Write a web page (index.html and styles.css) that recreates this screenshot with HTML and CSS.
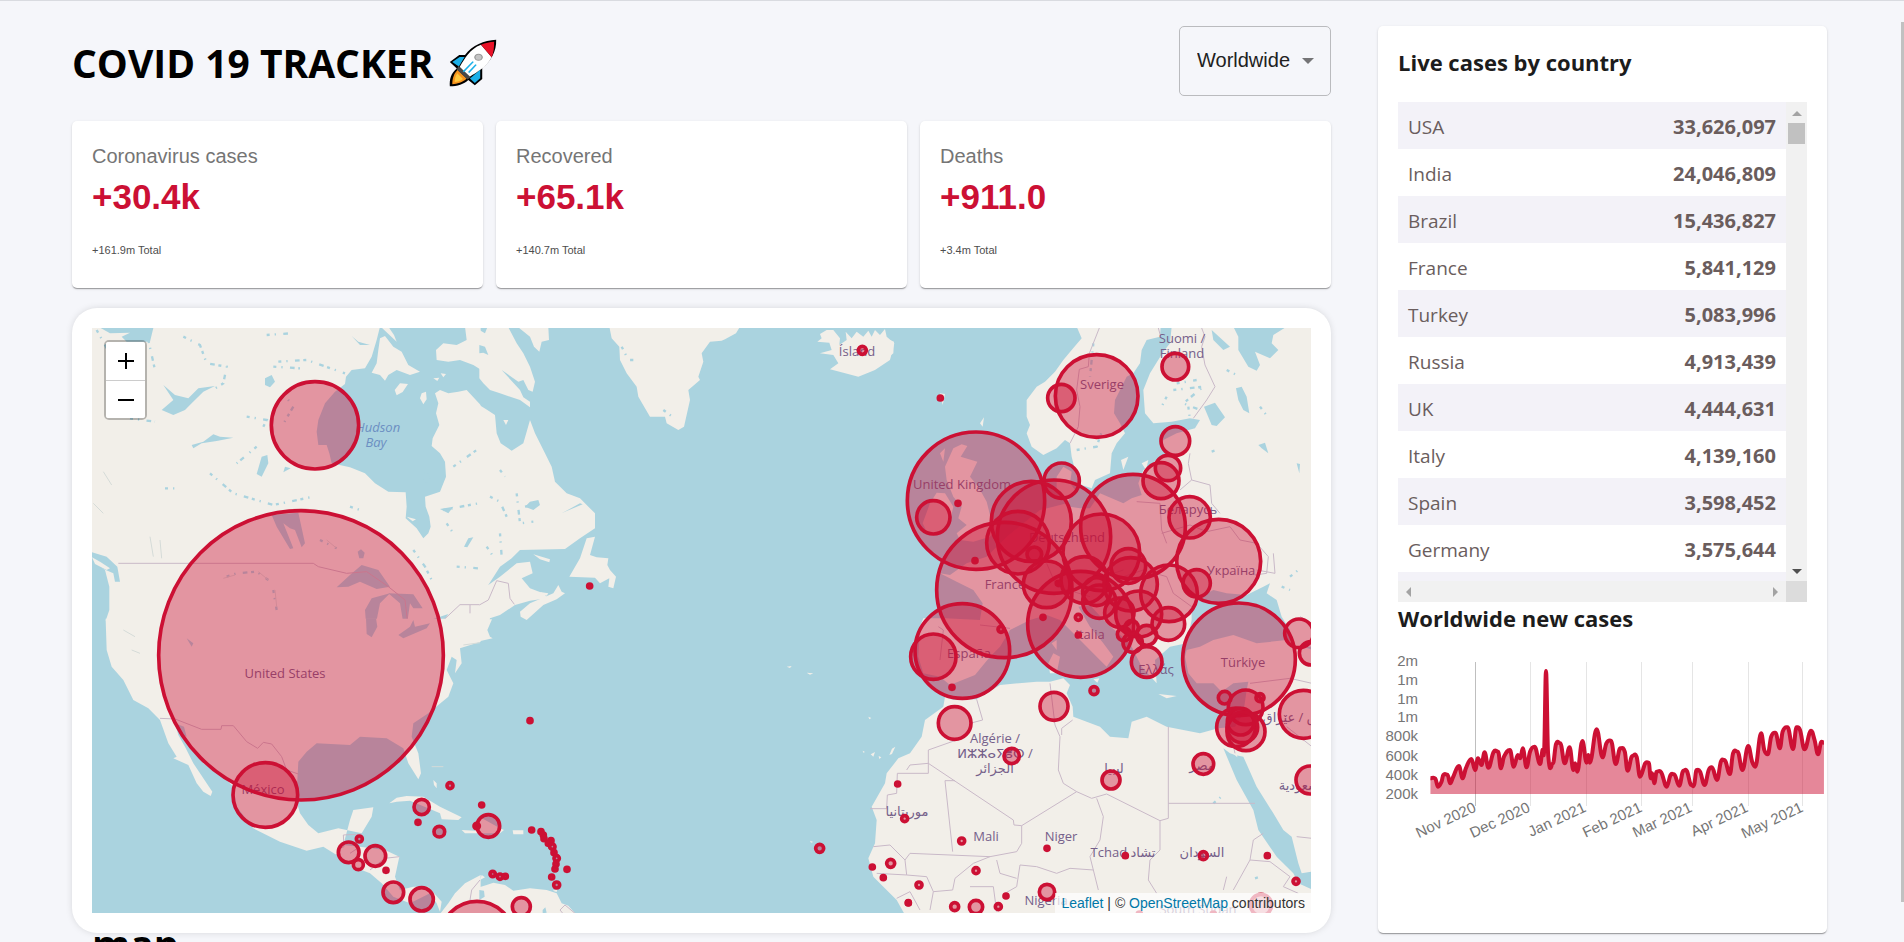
FILE: index.html
```html
<!DOCTYPE html>
<html lang="en">
<head>
<meta charset="utf-8">
<title>COVID 19 Tracker</title>
<link rel="stylesheet" href="styles.css">
</head>
<body>
<div class="app">
  <main class="layout">
    <section class="left">
      <header class="header">
        <h1 class="title">COVID 19 TRACKER
          <svg class="rocket" viewBox="965 120 117 142" preserveAspectRatio="none" aria-hidden="true">
            <path d="M1080 122C1050 124 1022 138 1004 167L990 167L967 188L984 207C969 222 966 240 967 260C985 260 1002 253 1012 241L1028 257L1046 238L1046 206C1068 185 1081 155 1080 122Z" fill="#000"/>
            <path d="M991 173L1003 173L989 201L973 188Z" fill="#1cb0e8"/>
            <path d="M1041 211L1041 236L1028 250L1016 237Z" fill="#1cb0e8"/>
            <path d="M986 211L1008 237C998 249 985 253 973 254C973 238 976 224 986 211Z" fill="#f7941d"/>
            <path d="M985 221L999 238C993 244 986 246 979 247C979 238 980 230 985 221Z" fill="#ffc83d"/>
            <path d="M1043 137C1015 150 1003 178 991 203L1014 233C1035 216 1055 205 1069 174Z" fill="#fff"/>
            <path d="M1043 137C1053 131 1065 129 1075 128C1075 145 1074 160 1069 174Z" fill="#e81228"/>
            <path d="M988 199L1018 233L1010 240L984 210Z" fill="#484848"/>
            <circle cx="1037" cy="174" r="9" fill="#c4c4c4" stroke="#999" stroke-width="3"/>
            <path d="M1024 187L1000 217M1031 196L1013 219" stroke="#1cb0e8" stroke-width="4"/>
          </svg>
        </h1>
        <div class="picker">
          <select class="picker-select" aria-label="Country"><option>Worldwide</option></select>
          <svg class="picker-arrow" viewBox="0 0 12 6" aria-hidden="true"><path d="M0 0H12L6 6Z"/></svg>
        </div>
      </header>

      <div class="stats">
        <article class="card stat"><h2 class="stat-name">Coronavirus cases</h2><p class="stat-value">+30.4k</p><p class="stat-total">+161.9m Total</p></article>
        <article class="card stat"><h2 class="stat-name">Recovered</h2><p class="stat-value">+65.1k</p><p class="stat-total">+140.7m Total</p></article>
        <article class="card stat"><h2 class="stat-name">Deaths</h2><p class="stat-value">+911.0</p><p class="stat-total">+3.4m Total</p></article>
      </div>

      <div class="map-card">
        <div class="map">
          <svg class="map-canvas" viewBox="92 328 1219 585" preserveAspectRatio="xMidYMid slice" role="img" aria-label="Cases by country">
            <rect x="92" y="328" width="1219" height="585" fill="#aad3df"/>

            <!-- Canada and northern United States -->
            <g transform="translate(60 310) scale(.33333)">
              <path class="land" d="M90 50H1262V932H137L148 900L148 830L135 780L90 750Z"/>
              <path class="water" d="M122 54H280L270 95L200 95L185 80L210 68L150 70Z"/>
              <path class="water" d="M960 50L950 90L935 140L915 175L875 180L858 200L855 222L825 245L795 280L775 330L770 365L775 405L800 405L808 430L815 460L870 472L915 490L945 520L985 545L1037 547L1040 590L1037 625L1070 655L1090 685L1105 670L1112 650L1108 620L1097 590L1095 560L1140 545L1158 500L1155 455L1140 430L1115 408L1118 385L1138 345L1128 310L1135 280L1125 250L1140 240L1165 250L1195 245L1220 240L1264 287V180L1240 165L1200 150L1165 155L1130 150L1128 120L1150 100L1190 105L1220 90L1215 50Z"/>
              <path class="land" d="M960 85L975 78L1000 110L1025 125L1045 165L1080 185L1050 195L1010 180L985 195L975 212L960 195L935 188L950 160L955 120ZM1004 240L1020 220L1044 222L1028 246L1010 256ZM1085 250L1098 245L1100 268L1090 283L1080 265ZM1120 205L1138 203L1132 213ZM1142 190L1158 192L1150 202ZM1040 620L1068 628L1058 634Z"/>
              <path class="land" d="M962 50L1010 95L1002 75L985 50Z"/>
              <path class="water" d="M305 300L340 270L310 225L345 255L385 265L415 235L465 228L430 245L395 280L375 300L340 315ZM395 405L430 395L460 373L480 380L520 383L470 393L425 400L400 415ZM590 492L605 440L622 435L625 460L605 500ZM615 205L635 195L645 215L630 232L615 225ZM875 78L895 95L930 105L900 105ZM1212 710L1225 685L1240 682L1222 712ZM1140 597L1180 590L1165 610ZM1085 500L1100 480L1112 510L1098 520ZM675 470L692 475L670 487Z"/>
              <path class="water" d="M635 615L715 608L735 700L725 712L705 660L690 655L670 640L700 715L690 717L650 650ZM830 832L870 795L905 765L955 780L990 830L950 837L900 815L865 830ZM920 965L915 900L935 865L990 850L960 880L950 930L948 965ZM985 850L1060 853L1088 895L1060 895L1050 880L1040 950L1030 940L1020 880ZM893 725L903 718L914 728L910 745L898 745ZM1095 935L1165 912L1150 935L1100 942Z"/>
              <path class="water" d="M90 725L140 740L172 770L180 815L165 815L160 790L125 775L90 755Z"/>
              <path class="land" d="M96 742L120 755L150 775L140 780L105 762Z"/>
              <path class="speck" d="M370 80L420 105L440 160L500 170L490 220L450 245M265 90L285 180M655 155L740 150L855 190M640 170L720 175M620 75L690 70M560 320L620 330L610 350M450 490L520 550L640 585L760 560M590 410L530 460M670 250L700 290L665 350M110 60L160 150L200 110M210 325L285 335M1180 470L1250 420M1150 600L1255 580M1160 640L1180 670M1060 720L1095 770L1120 820M1190 770L1255 775M870 590L900 600M780 690L830 715M500 800L530 790L590 785L625 810M640 840L650 900M315 535L350 535"/>
              <path class="contour" d="M130 485L155 525M100 580L130 610M270 680L280 740M300 690L305 745M490 805L525 795M595 785L625 810M645 840L650 890M800 690L830 715"/>
              <path class="border" d="M175 760H760L775 770L860 790L920 785L985 830L1035 870L1042 930L1030 960M1140 940L1200 884H1262M1230 885V910"/>
            </g>

            <!-- Labrador, Baffin, Greenland, Iceland -->
            <g transform="translate(480 310) scale(.33333)">
              <path class="land" d="M-2 285L22 300L45 315L50 370L62 400L95 422L130 400L140 365L150 330L165 370L195 430L215 470L225 515L260 550L300 565L345 610V655L300 685L255 717L120 720L95 745L60 770L25 825L60 800L110 760L150 755L158 790L125 805L150 835L195 852L200 865L150 872L105 885L60 915L30 925L20 962H-2Z"/>
              <path class="land" d="M120 905L150 880L220 850L235 825L245 845L255 850L230 868L190 885L140 930L122 920ZM268 800L300 745L320 685L345 680L330 735L350 742L385 745L382 765L390 780L408 800L400 835L385 830L388 805L360 820L345 803ZM160 733L210 748L208 757L180 748ZM175 845L205 850L200 857ZM70 330L85 330L78 345Z"/>
              <path class="land" d="M-2 60L15 70L22 52H85L110 100L130 130L150 170L165 215L158 245L145 240L130 210L115 215L65 180L120 240L130 262L150 275V292L120 270L60 250L30 240L10 220L-2 205ZM115 52H205L207 90L185 95L178 125L162 110L150 80Z"/>
              <path class="water" d="M-2 105L15 110L25 135L10 128L-2 130Z"/>
              <path class="land" d="M388 50H780L768 70L735 88L725 92L690 95L665 130L670 155L655 200L660 210L625 240L630 270L612 350L595 360L560 340L555 320L510 320L475 260L470 230L440 190L420 150L418 110L395 85Z"/>
              <path class="land" d="M1012 95L1025 85L1020 72L1040 60L1060 60L1080 85L1078 105L1100 90L1097 65L1115 85L1130 65L1150 80L1165 62L1175 80L1185 60L1200 75L1215 57L1220 80L1243 100L1230 150L1185 180L1135 200L1090 188L1050 178L1075 160L1060 135L1020 130L1055 120L1048 98Z"/>
              <path class="speck" d="M30 560L60 575L80 620M135 590L180 580M60 480L75 500M60 670L65 740M110 550L120 640L160 635M20 710L40 740M425 110L445 150L460 150M550 300L590 330"/>
              <path class="water" d="M245 610L300 580L308 583L260 603ZM150 575L175 570L180 585L160 600L135 590Z"/>
              <path class="border" d="M-2 885L25 870L50 812L85 820L90 865L103 883"/>
            </g>

            <!-- United States, Mexico, Central America -->
            <g transform="translate(60 620) scale(.33333)">
              <path class="land" d="M137 0L140 90L155 140L190 180L220 240L265 265L300 300L325 370L350 410L340 415L385 435L410 490L430 515L452 528L457 515L430 475L400 430L375 380L355 345L345 310L385 370L430 430L500 480L520 500L530 560L580 625L660 665L740 692L790 680L830 705L880 740L930 760L965 790L1000 830L1050 850L1110 820L1130 850L1140 875L1145 845L1105 800L1060 800L1020 810L1005 770L1018 710L975 690L900 680L850 675L870 600L880 570L940 562L935 590L905 640L835 625L775 640L745 615L720 580L710 545L712 480L715 425L740 395L770 370L870 375L900 350L980 355L1030 385L1045 430L1075 478L1083 460L1075 400L1055 350L1060 310L1105 280L1165 230L1180 190L1160 150L1175 110L1190 120L1185 160L1205 130L1200 85L1262 65V-4H137Z"/>
              <path class="water" d="M918 -5H948L952 20L935 52L920 42ZM1015 45L1050 20L1060 0L1065 20L1110 10L1100 25L1030 55ZM380 55L400 70L395 80ZM345 310L372 320L380 350L360 340Z"/>
              <path class="land" d="M988 550L1010 533L1040 528L1090 530L1140 560L1205 592L1195 600L1145 598L1140 580L1110 567L1050 542L1010 545ZM1205 630L1245 632L1262 590V640L1215 640ZM1140 882L1165 850L1185 820L1215 790L1262 765V882ZM1120 480L1130 490V505L1122 495Z"/>
              <path class="border" d="M300 295L345 297L425 328H483L485 317H520L560 365L593 385L610 367L635 372L665 410L680 450L715 462M905 642L850 645L852 680L840 685L830 705M900 680L870 700M1018 710L975 715L930 750M1260 780L1235 810L1230 840L1260 845"/>
              <path class="contour" d="M1210 75L1260 68M1115 440L1150 440M190 30L225 50M215 90L240 100"/>
            </g>

            <!-- New England, Caribbean, Atlantic islands -->
            <g transform="translate(480 620) scale(.33333)">
              <path class="land" d="M-2 -2H36L22 30L30 50L38 55L-2 64ZM98 631H130V643H100ZM-2 590L60 625L72 630L60 640L-2 640ZM-2 802L20 795L40 788L75 795L100 812L150 805L200 810L230 820L245 850L265 857L287 882H-2ZM5 765L15 772L0 780ZM218 812L232 808L230 816Z"/>
              <path class="land" d="M920 140L935 138L930 144ZM980 158L1000 160L990 164ZM1165 290L1174 294L1168 298ZM1148 392L1155 396L1150 398ZM1172 403L1185 396L1180 410ZM1196 408L1204 412L1198 417ZM1228 405L1236 386L1246 380L1236 402ZM990 662L1000 666L993 668Z"/>
              <path class="water" d="M-2 810L12 812L14 830L-2 840ZM188 870L196 862L200 878L188 880Z"/>
              <path class="border" d="M285 880L255 855L240 870L250 882"/>
            </g>

            <!-- Europe -->
            <g transform="translate(890 310) scale(.33333)">
              <path class="land" d="M560 50L575 85L545 120L520 150L495 185L465 215L440 230L410 270V320L420 345L410 370L425 410L460 435L500 415L525 390L540 400L545 440L560 500L575 525L605 535L615 510L660 490L665 430L680 400L705 370L690 340L672 310L675 270L710 200L730 190L750 160L755 120L770 90L810 80L812 50Z"/>
              <path class="land" d="M845 50L840 100L820 125L780 190L760 240L765 310L790 340L845 335L900 325L930 330L915 355L860 370L820 390L815 410L835 430L800 450L760 480L745 520L755 555L725 565L700 580L630 550L600 595L570 595L540 590L515 565L500 540V500L520 470L545 485L540 520L555 540L530 580L490 590L450 600L400 640L350 680L290 740L230 760L180 795L150 790L200 815L250 840L278 880L270 930L165 925L100 925L90 950L85 1040L100 1090L150 1100L180 1125L255 1095L300 1040L330 1010L360 960L420 930L470 915L510 930L550 970L620 1040L650 1070L670 1040L640 1000L600 950L565 890L600 885L650 940L720 1000L755 1070L800 1120L795 1050L840 1010L890 1000L905 930V900L930 860L970 840L1010 850L1070 855L1120 830L1140 820L1130 850L1160 870L1175 920L1200 960L1200 1010H1266V50Z"/>
              <path class="land" d="M190 415L215 403L232 408L212 440L262 455L240 500L265 530L290 575L300 615L325 650L300 680L250 695L210 690L200 670L230 645L205 625L215 590L190 560L170 510L165 470ZM120 580L140 548L165 550L190 590L175 655L115 675L98 640ZM150 430L165 415L160 455ZM270 340L282 322L278 350ZM150 250L165 252L158 285ZM0 90L12 95L10 130L0 138ZM693 450L715 440L700 480ZM755 460L775 450L768 480ZM475 1060L490 1030L510 1040L500 1090L480 1090ZM485 1000L500 990L500 1020Z"/>
              <path class="water" d="M1030 50H1190L1150 75L1145 100L1165 120L1140 145L1095 125L1110 165L1100 182L1075 170L1045 120L1045 80ZM942 290L975 278L1005 322L980 348L965 345ZM1038 235L1055 230L1070 260L1078 310L1060 300L1045 270ZM1105 405L1125 398L1135 430L1115 415ZM1220 460L1230 462L1228 490ZM965 60L1020 110L1000 120L970 90Z"/>
              <path class="speck" d="M850 240L940 230L880 280L930 300M860 220L920 210M895 290L900 330M1010 180L1050 200M965 425L980 420M1110 290L1140 330M610 100L600 200M560 420L620 410L640 350M830 260L810 300"/>
              <path class="border" d="M628 54L598 130L595 170L568 178L560 240L570 290L565 350L540 400M805 54L812 80M935 54L945 80L935 110L945 165L975 230L950 270L910 325M900 430L895 460L905 510M870 540L905 510L960 525L965 580L990 610M740 575L810 580L815 660L830 700M815 670L900 645L950 665L1020 650L1050 690L1100 700L1135 740L1130 790L1095 795M270 945L360 955M145 950L160 960L150 1050M700 800L760 780L830 800L850 850M560 780L640 800L700 780M470 760L500 830L600 860M850 850L905 890"/>
            </g>

            <!-- North Africa and Middle East -->
            <g transform="translate(890 540) scale(.33333)">
              <path class="land" d="M60 640L95 590L105 540L160 500L165 470L190 480L260 478L330 435L440 425L480 425L520 415L540 435L530 460L548 500L550 530L630 560L660 590L715 595L725 545L770 530L830 560L930 580L985 565L1035 560L1060 520L1070 450L1075 425L1030 430L995 455L970 430L920 430L895 400L885 350L890 330L930 320L970 300L1030 285L1100 310L1190 300L1266 330V1125H45L20 1080L-20 1040L-50 1010L-65 955L-45 910L-40 840L-55 800L-15 730L-10 700L25 655Z"/>
              <path class="water" d="M1000 625L1020 640L1035 645L1060 650L1100 740L1150 820L1180 870L1205 890L1225 970L1235 1000L1266 995V1048L1225 1030L1210 1000L1160 950L1105 870L1090 810L1040 720Z"/>
              <path class="land" d="M805 462L860 468L830 475ZM610 418L628 415L622 428Z"/>
              <path class="land" d="M1028 640L1040 630L1042 652Z"/>
              <path class="speck" d="M970 790L1000 765M1200 110L1225 90M1095 1015L1105 1012M1175 140L1200 150"/>
              <path class="border" d="M-60 806H-10L-8 765L20 760L22 700H115V630L200 600M50 690L60 675L115 670L370 840L372 855L395 857V910L380 935L300 950L60 940L45 960M195 722H165L188 935M395 857L560 755L520 730L505 690L510 590L495 555L480 430M515 585V565L548 540M560 755L605 775L650 762L810 842V930L780 960L775 1020L800 1060M810 842L835 835V560M835 790H1095M620 775L640 830L630 900L600 950L610 990L625 1050M610 990L540 985L500 1000L440 980L390 975L380 1040L345 1060M260 478L278 540L240 550M300 950L250 970L195 1015L188 1050L130 1055M320 960L330 1000L380 1015M240 1040H310L320 1115M-50 920L0 915L45 960L50 1005L-40 1000M130 1055L120 1110M50 1005L110 1010L130 1055M20 1075L60 1055L90 1110M1080 960L1090 900L1120 880M1080 960L1140 965L1200 1010L1180 1040L1225 1060M1080 960L1030 1050M1000 1050L1010 1010M1220 890L1266 895M1080 430L1200 415L1266 430M1190 560L1266 620M1020 570L1035 640M1150 40L1155 100L1100 90M1230 230L1266 250"/>
            </g>

            <g class="labels">
              <text x="285" y="678">United States</text>
              <text x="263" y="794">México</text>
              <text x="857" y="356">Ísland</text>
              <text x="1102" y="389">Sverige</text>
              <text x="962" y="489">United Kingdom</text>
              <text x="1067" y="542">Deutschland</text>
              <text x="1182" y="343">Suomi /</text>
              <text x="1182" y="358">Finland</text>
              <text x="1188" y="514">Беларусь</text>
              <text x="1231" y="575">Україна</text>
              <text x="1005" y="589">France</text>
              <text x="969" y="658">España</text>
              <text x="1090" y="639">Italia</text>
              <text x="1156" y="674">Ελλάς</text>
              <text x="1243" y="667">Türkiye</text>
              <text x="995" y="743">Algérie /</text>
              <text x="995" y="758">ⵍⵣⵣⴰⵢⴻⵔ /</text>
              <text x="995" y="773">الجزائر</text>
              <text x="1114" y="773">ليبيا</text>
              <text x="1202" y="770">مصر</text>
              <text x="907" y="816">موريتانيا</text>
              <text x="986" y="841">Mali</text>
              <text x="1061" y="841">Niger</text>
              <text x="1123" y="857">Tchad تشاد</text>
              <text x="1202" y="857">السودان</text>
              <text x="1046" y="905">Nigeria</text>
              <text x="1302" y="722">العراق / عێراق</text>
              <text x="1303" y="790">السعودية</text>
              <text x="1198" y="914">South Sudan</text>
              <g class="sea"><text x="378" y="432">Hudson</text><text x="376" y="447">Bay</text></g>
            </g>

            <!-- Case circles -->
            <g class="cases" transform="translate(60 310) scale(.33333)">
              <circle cx="765" cy="346" r="131"/><ellipse cx="723" cy="1036" rx="427" ry="434"/>
            </g>
            <g class="cases" transform="translate(480 310) scale(.33333)">
              <circle cx="329" cy="828" r="6"/><circle cx="1147" cy="121" r="12"/>
            </g>
            <g class="cases" transform="translate(60 620) scale(.33333)">
              <circle cx="616" cy="525" r="97"/><circle cx="1170" cy="497" r="9"/><circle cx="1085" cy="561" r="23"/><circle cx="1074" cy="607" r="6"/><circle cx="1138" cy="635" r="16"/><circle cx="898" cy="657" r="9"/><circle cx="866" cy="697" r="31"/><circle cx="946" cy="708" r="31"/><circle cx="895" cy="734" r="15"/><circle cx="978" cy="751" r="6"/><circle cx="1000" cy="817" r="31"/><circle cx="1085" cy="838" r="35"/><circle cx="1251" cy="954" r="110"/>
            </g>
            <g class="cases" transform="translate(480 620) scale(.33333)">
              <circle cx="150" cy="302" r="6"/><circle cx="5" cy="555" r="6"/><circle cx="25" cy="618" r="34"/><circle cx="-10" cy="618" r="8"/><circle cx="155" cy="630" r="6"/><circle cx="183" cy="635" r="6"/><circle cx="190" cy="645" r="6"/><circle cx="192" cy="656" r="6"/><circle cx="213" cy="662" r="6"/><circle cx="205" cy="670" r="6"/><circle cx="217" cy="680" r="8"/><circle cx="222" cy="698" r="6"/><circle cx="230" cy="715" r="8"/><circle cx="228" cy="732" r="6"/><circle cx="225" cy="747" r="6"/><circle cx="261" cy="748" r="6"/><circle cx="215" cy="771" r="6"/><circle cx="230" cy="795" r="9"/><circle cx="38" cy="762" r="8"/><circle cx="60" cy="770" r="8"/><circle cx="76" cy="769" r="6"/><circle cx="124" cy="860" r="27"/><circle cx="1019" cy="685" r="12"/><circle cx="1253" cy="492" r="6"/><circle cx="1274" cy="596" r="9"/><circle cx="1232" cy="730" r="12"/><circle cx="1177" cy="741" r="6"/><circle cx="1210" cy="773" r="6"/><circle cx="1285" cy="849" r="6"/>
            </g>
            <g class="cases" transform="translate(890 310) scale(.33333)">
              <circle cx="151" cy="264" r="6"/><circle cx="620" cy="258" r="124"/><circle cx="514" cy="264" r="41"/><circle cx="258" cy="572" r="206"/><circle cx="204" cy="580" r="6"/><circle cx="130" cy="622" r="50"/><circle cx="515" cy="512" r="53"/><circle cx="492" cy="680" r="170"/><circle cx="424" cy="634" r="120"/><circle cx="384" cy="698" r="94"/><circle cx="634" cy="727" r="115"/><circle cx="729" cy="650" r="157"/><circle cx="856" cy="170" r="40"/><circle cx="856" cy="393" r="43"/><circle cx="834" cy="474" r="38"/><circle cx="813" cy="512" r="54"/><circle cx="899" cy="622" r="62"/><circle cx="986" cy="754" r="126"/>
            </g>
            <g class="cases" transform="translate(890 540) scale(.33333)">
              <circle cx="343" cy="150" r="203"/><circle cx="217" cy="333" r="142"/><circle cx="130" cy="350" r="68"/><circle cx="333" cy="268" r="9"/><circle cx="186" cy="442" r="6"/><circle cx="255" cy="62" r="6"/><circle cx="572" cy="253" r="159"/><circle cx="470" cy="133" r="70"/><circle cx="433" cy="43" r="22"/><circle cx="583" cy="120" r="70"/><circle cx="628" cy="185" r="50"/><circle cx="620" cy="155" r="42"/><circle cx="565" cy="232" r="9"/><circle cx="565" cy="285" r="6"/><circle cx="459" cy="232" r="6"/><circle cx="505" cy="130" r="6"/><circle cx="612" cy="452" r="12"/><circle cx="492" cy="499" r="42"/><circle cx="194" cy="549" r="49"/><circle cx="365" cy="648" r="23"/><circle cx="663" cy="720" r="27"/><circle cx="215" cy="903" r="9"/><circle cx="471" cy="925" r="6"/><circle cx="258" cy="992" r="9"/><circle cx="87" cy="1035" r="9"/><circle cx="55" cy="1088" r="6"/><circle cx="194" cy="1100" r="12"/><circle cx="258" cy="1101" r="20"/><circle cx="325" cy="1100" r="9"/><circle cx="348" cy="1068" r="6"/><circle cx="471" cy="1056" r="23"/>
            </g>
            <g class="cases" transform="translate(1100 540) scale(.33333)">
              <circle cx="290" cy="130" r="41"/><circle cx="207" cy="160" r="85"/><circle cx="205" cy="252" r="49"/><circle cx="85" cy="78" r="52"/><circle cx="92" cy="133" r="80"/><circle cx="116" cy="222" r="69"/><circle cx="58" cy="218" r="44"/><circle cx="72" cy="283" r="20"/><circle cx="98" cy="308" r="29"/><circle cx="95" cy="262" r="20"/><circle cx="140" cy="286" r="30"/><circle cx="140" cy="366" r="46"/><circle cx="417" cy="358" r="169"/><circle cx="374" cy="473" r="19"/><circle cx="437" cy="502" r="52"/><circle cx="480" cy="473" r="12"/><circle cx="408" cy="562" r="58"/><circle cx="438" cy="575" r="57"/><circle cx="422" cy="545" r="40"/><circle cx="427" cy="562" r="46"/><circle cx="597" cy="280" r="43"/><circle cx="633" cy="340" r="35"/><circle cx="610" cy="523" r="72"/><circle cx="630" cy="720" r="42"/><circle cx="310" cy="672" r="31"/><circle cx="310" cy="947" r="12"/><circle cx="502" cy="947" r="6"/><circle cx="588" cy="1024" r="9"/><circle cx="76" cy="947" r="6"/><circle cx="483" cy="1095" r="32"/><circle cx="340" cy="1122" r="6"/><circle cx="118" cy="1122" r="6"/>
            </g>
          </svg>
          <div class="zoom">
            <button class="zoom-button" type="button" aria-label="Zoom in"><svg viewBox="0 0 16 16" aria-hidden="true"><path d="M8 0V16M0 8H16"/></svg></button>
            <button class="zoom-button" type="button" aria-label="Zoom out"><svg viewBox="0 0 16 16" aria-hidden="true"><path d="M0 8H16"/></svg></button>
          </div>
          <div class="credit"><a href="#leaflet">Leaflet</a> | © <a href="#osm">OpenStreetMap</a> contributors</div>
        </div>
      </div>
    </section>

    <aside class="card side">
      <h3 class="side-title">Live cases by country</h3>
      <div class="scroller">
        <div class="scroll-view">
          <table class="countries">
            <tbody>
              <tr><td>USA</td><td class="num">33,626,097</td></tr>
              <tr><td>India</td><td class="num">24,046,809</td></tr>
              <tr><td>Brazil</td><td class="num">15,436,827</td></tr>
              <tr><td>France</td><td class="num">5,841,129</td></tr>
              <tr><td>Turkey</td><td class="num">5,083,996</td></tr>
              <tr><td>Russia</td><td class="num">4,913,439</td></tr>
              <tr><td>UK</td><td class="num">4,444,631</td></tr>
              <tr><td>Italy</td><td class="num">4,139,160</td></tr>
              <tr><td>Spain</td><td class="num">3,598,452</td></tr>
              <tr><td>Germany</td><td class="num">3,575,644</td></tr>
              <tr><td></td><td></td></tr>
            </tbody>
          </table>
        </div>
        <div class="bar bar-v" aria-hidden="true">
          <svg class="tri" viewBox="0 0 10 10"><path d="M0 8L5 3L10 8Z" fill="#a3a3a3"/></svg>
          <span class="thumb"></span>
          <svg class="tri tri-end" viewBox="0 0 10 10"><path d="M0 2H10L5 7Z" fill="#505050"/></svg>
        </div>
        <div class="bar bar-h" aria-hidden="true">
          <svg class="tri" viewBox="0 0 10 10"><path d="M7 0V10L2 5Z" fill="#a3a3a3"/></svg>
          <svg class="tri tri-end" viewBox="0 0 10 10"><path d="M3 0V10L8 5Z" fill="#a3a3a3"/></svg>
        </div>
        <div class="bar-corner" aria-hidden="true"></div>
      </div>
      <h3 class="side-title">Worldwide new cases</h3>
      <svg class="chart" viewBox="1380 650 447 200" role="img" aria-label="Worldwide new cases chart">
        <path d="M1530.5 662V806M1586.5 662V806M1641.5 662V806M1692.5 662V806M1748.5 662V806M1802.5 662V806" stroke="#e5e5e5"/>
        <path d="M1475.5 662V806" stroke="#bfbfbf"/>
        <g transform="translate(1360 540) scale(.347 .33333)">
          <path class="area" id="area"/>
          <path class="line" id="line"/>
        </g>
        <g class="ticks">
          <text x="1418" y="666">2m</text><text x="1418" y="685">1m</text><text x="1418" y="704">1m</text><text x="1418" y="722">1m</text><text x="1418" y="741">800k</text><text x="1418" y="761">600k</text><text x="1418" y="780">400k</text><text x="1418" y="799">200k</text>
          <text transform="translate(1477 811) rotate(-25)">Nov 2020</text><text transform="translate(1531 811) rotate(-25)">Dec 2020</text><text transform="translate(1587 811) rotate(-25)">Jan 2021</text><text transform="translate(1643 811) rotate(-25)">Feb 2021</text><text transform="translate(1693 811) rotate(-25)">Mar 2021</text><text transform="translate(1749 811) rotate(-25)">Apr 2021</text><text transform="translate(1804 811) rotate(-25)">May 2021</text>
        </g>
      </svg>
    </aside>

    <h2 class="map-title">map</h2>
  </main>
  <div class="page-bar" aria-hidden="true"></div>
</div>
<script src="chart.js"></script>
</body>
</html>
```
FILE: chart.js
```js
// Daily new cases as x,y pairs in the chart's plot space.
const points = `203,715 217,716 225,740 235,725 240,705 252,704 260,730 268,712 285,678 296,715 305,685
321,657 332,690 340,655 350,675 359,637 370,683 385,636 398,635 406,685 415,650 432,630 443,680 455,645
462,655 469,625 480,682 490,635 503,620 519,672 526,630 531,625 536,393 542,640 556,670 565,612 577,610
590,670 604,622 615,690 620,670 626,695 641,603 653,668 658,645 662,668 682,568 699,652 710,610 723,602
737,672 750,625 763,635 771,692 785,648 797,650 807,710 822,670 832,668 838,715 842,700 848,730 855,695
868,697 884,740 895,705 905,703 920,737 932,692 942,693 955,735 963,734 970,690 980,695 993,735 1005,690
1014,682 1029,720 1040,665 1050,660 1066,702 1075,640 1088,635 1102,690 1119,618 1130,665 1139,680
1156,580 1165,630 1175,643 1185,590 1197,578 1210,625 1218,575 1232,562 1248,627 1258,562 1268,570
1281,628 1300,572 1310,600 1320,643 1330,605 1337,608`
  .split(/\s+/)
  .map((pair) => pair.split(",").map(Number));

const BASELINE = 762;

// Slope at a point: flat on peaks and dips, the neighbours' average elsewhere.
function slope(i) {
  const prev = points[i - 1];
  const here = points[i];
  const next = points[i + 1];
  if (!prev || !next) return 0;
  if ((here[1] - prev[1]) * (next[1] - here[1]) <= 0) return 0;
  return (next[1] - prev[1]) / (next[0] - prev[0]);
}

let curve = `M${points[0]}`;
for (let i = 1; i < points.length; i++) {
  const [x0, y0] = points[i - 1];
  const [x1, y1] = points[i];
  const reach = (x1 - x0) * 0.4;
  curve += `C${x0 + reach},${y0 + slope(i - 1) * reach} ${x1 - reach},${y1 - slope(i) * reach} ${x1},${y1}`;
}

document.getElementById("line").setAttribute("d", curve);
document.getElementById("area").setAttribute(
  "d",
  `${curve}V${BASELINE}H${points[0][0]}Z`
);
```
FILE: styles.css
```css
* { box-sizing: border-box; }

body {
  margin: 0;
  background: #f5f6fa;
  font-family: "Open Sans", "Noto Sans", sans-serif;
  color: #000;
}

h1, h2, h3, p { margin: 0; }

.app {
  position: relative;
  height: 100vh;
  overflow: hidden;
  border-top: 1px solid #d9dbe0;
}

.layout {
  display: grid;
  grid-template-columns: minmax(0, 1259fr) minmax(0, 449fr);
  column-gap: 47px;
  padding: 25px 77px 0 72px;
}

.card {
  background: #fff;
  border-radius: 5px;
  box-shadow: 0 2px 1px -1px rgba(0, 0, 0, .2), 0 1px 1px rgba(0, 0, 0, .14), 0 1px 3px rgba(0, 0, 0, .12);
}

.header {
  display: flex;
  align-items: center;
  justify-content: space-between;
  height: 70px;
  margin-bottom: 25px;
}

.title {
  display: flex;
  align-items: center;
  gap: 16px;
  padding-top: 4px;
  font-size: 39px;
  line-height: 50px;
  font-weight: 700;
}

.rocket { width: 48px; height: 48px; }

.picker { position: relative; }

.picker-select {
  appearance: none;
  width: 152px;
  height: 70px;
  padding: 0 40px 2px 17px;
  border: 1px solid #babbbe;
  border-radius: 5px;
  background: transparent;
  font: 20px "Liberation Sans", Arial, sans-serif;
  color: #212121;
}

.picker-arrow {
  position: absolute;
  right: 17px;
  top: 32px;
  width: 12px;
  height: 6px;
  fill: #747476;
  pointer-events: none;
}

.stats {
  display: grid;
  grid-template-columns: repeat(3, minmax(0, 1fr));
  gap: 13px;
  margin-bottom: 20px;
}

.stat {
  padding: 22px 20px 30px;
  font-family: "Liberation Sans", Arial, sans-serif;
}

.stat-name { font-size: 20px; line-height: 26px; font-weight: 400; color: #757575; }
.stat-value { margin-top: 8px; font-size: 35px; line-height: 40px; font-weight: 700; color: #cc1034; }
.stat-total { margin-top: 25px; font-size: 11px; line-height: 16px; color: #4e4e4e; }

.map-card {
  padding: 20px;
  border-radius: 25px;
  background: #fff;
  box-shadow: 0 0 8px -2px rgba(0, 0, 0, .2);
}

.map { position: relative; aspect-ratio: 1219 / 585; overflow: hidden; }
.map-canvas { display: block; width: 100%; height: 100%; }

.land { fill: #f2efe9; }
.water { fill: #aad3df; }
.speck { fill: none; stroke: #aad3df; stroke-width: 7; stroke-dasharray: 9 15 4 22 14 11; }
.contour { fill: none; stroke: #d5dbd8; stroke-width: 3; }
.border { fill: none; stroke: #c9b9c8; stroke-width: 3; stroke-linejoin: round; }

.labels text {
  font-family: "Open Sans", "Noto Sans", "DejaVu Sans", sans-serif;
  font-size: 13px;
  fill: #75608a;
  text-anchor: middle;
}

.labels .sea text { fill: #6c8fc2; font-style: italic; }

.cases { fill: #cc1034; fill-opacity: .4; stroke: #cc1034; stroke-width: 11; }

.zoom {
  position: absolute;
  top: 12px;
  left: 12px;
  width: 43px;
  border: 2px solid rgba(0, 0, 0, .25);
  border-radius: 5px;
  background-clip: padding-box;
}

.zoom-button {
  display: flex;
  align-items: center;
  justify-content: center;
  width: 100%;
  height: 37px;
  padding: 0;
  border: 0;
  border-radius: 0 0 2px 2px;
  background: #fff;
}

.zoom-button:first-child { height: 39px; border-bottom: 1px solid #ccc; border-radius: 2px 2px 0 0; }
.zoom-button svg { width: 16px; height: 16px; stroke: #000; stroke-width: 2; }

.credit {
  position: absolute;
  right: 0;
  bottom: 0;
  padding: 0 6px;
  background: rgba(255, 255, 255, .7);
  font: 14px/20px "Liberation Sans", Arial, sans-serif;
  color: #333;
}

.credit a { color: #0078a8; text-decoration: none; }

.side { padding: 19px 20px 20px; }

.side-title { font-size: 22px; line-height: 34px; font-weight: 700; color: #1c1c1c; }

.scroller {
  display: grid;
  grid-template: minmax(0, 1fr) 21px / minmax(0, 1fr) 21px;
  height: 500px;
  margin-top: 23px;
}

.scroller + .side-title { line-height: 32px; }

.scroll-view { overflow: hidden; }

.countries { width: 100%; border-collapse: collapse; color: #6a5d5d; }
.countries tr { height: 47px; }
.countries tr:nth-child(odd) { background: #f3f2f8; }
.countries td { padding: 2px 10px 0; font-size: 19px; line-height: 30px; }
.countries .num { font-size: 20px; font-weight: 700; text-align: right; }

.bar { display: flex; align-items: center; background: #f1f1f1; }
.bar-v { flex-direction: column; padding: 6px 2px 4px; }
.bar-h { padding: 0 6px; }
.bar-corner { background: #dcdcdc; }
.tri { width: 10px; height: 10px; }
.tri-end { margin-top: auto; }
.bar-h .tri-end { margin: 0 0 0 auto; }
.thumb { width: 17px; height: 21px; margin-top: 5px; background: #c1c1c1; }

.chart { display: block; width: calc(100% + 38px); margin: 16px -20px 0 -18px; }
.area { fill: #cc1034; fill-opacity: .5; }
.line { fill: none; stroke: #cc1034; stroke-width: 4; stroke-linejoin: round; vector-effect: non-scaling-stroke; }
.ticks text { font: 15px "Liberation Sans", Arial, sans-serif; fill: #757575; text-anchor: end; }

.map-title { padding-left: 20px; font-size: 39px; line-height: 22px; }

.page-bar {
  position: absolute;
  top: 21px;
  right: 0;
  width: 3px;
  height: 880px;
  background: #c1c1c1;
}
```
